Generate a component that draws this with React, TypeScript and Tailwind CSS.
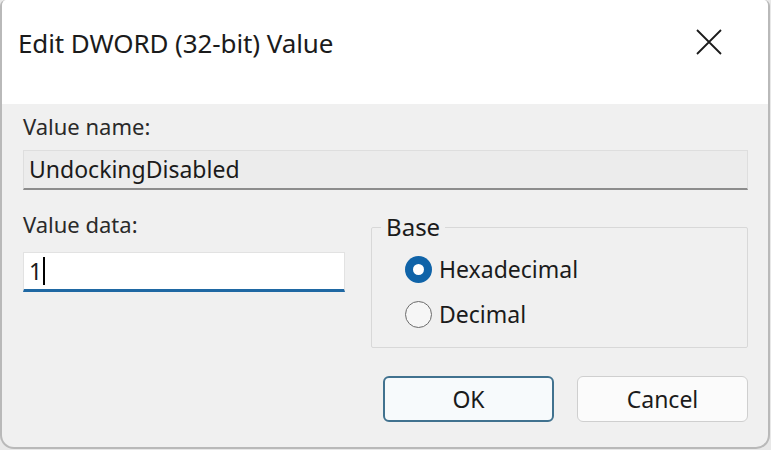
import React from "react";

const font = { fontFamily: '"Noto Sans", "Open Sans", sans-serif' };

function Radio({ checked, label }: { checked: boolean; label: string }) {
  return (
    <label className="flex h-[30px] items-center gap-[7px] text-[23px] text-[#1b1b1b]">
      {checked ? (
        <span className="flex h-[27px] w-[27px] items-center justify-center rounded-full bg-[#0f63a8]">
          <span className="h-[11px] w-[11px] rounded-full bg-white" />
        </span>
      ) : (
        <span className="h-[27px] w-[27px] rounded-full border-[1.5px] border-[#6b6b6b] bg-[#f6f6f6]" />
      )}
      <span className="leading-[30px]">{label}</span>
    </label>
  );
}

export default function App() {
  return (
    <div className="h-[450px] w-[771px] overflow-hidden bg-[#e8e8e8]" style={font}>
      <div className="flex h-[449px] w-[770px] flex-col overflow-hidden rounded-b-[14px] rounded-t-[6px] border-x-2 border-b-2 border-[#b9b9b9] bg-[#f0f0f0]">
        {/* title bar */}
        <div className="flex h-[104px] items-center justify-between bg-white pl-[16px] pr-[46px]">
          <h1 className="-mt-[18px] text-[26px] tracking-[-0.1px] text-[#1b1b1b]">
            Edit DWORD (32-bit) Value
          </h1>
          <svg width="26" height="26" viewBox="0 0 26 26" className="-mt-[20px]">
            <path d="M1 1 L25 25 M25 1 L1 25" stroke="#1b1b1b" strokeWidth="1.8" />
          </svg>
        </div>

        {/* body */}
        <div className="flex flex-1 flex-col pl-[21px] pr-[20px] text-[#1b1b1b]">
          <div className="mt-[10px] text-[22px] leading-[24px] text-[#2a2a2a]">Value name:</div>
          <div className="mt-[12px] flex h-[40px] items-center border border-[#dedede] border-b-[2px] border-b-[#8c8c8c] bg-[#ececec] px-[5px] text-[23px]">
            UndockingDisabled
          </div>

          <div className="mt-[22px] flex items-start gap-[26px]">
            <div className="flex w-[323px] flex-col">
              <div className="text-[22px] leading-[24px] text-[#2a2a2a]">Value data:</div>
              <div className="mt-[16px] flex h-[40px] items-center border border-[#e2e2e2] border-b-[3px] border-b-[#1f68a3] bg-white px-[5px] text-[23px]">
                1<span className="ml-[1px] h-[28px] w-[2px] bg-black" />
              </div>
            </div>

            <fieldset className="mt-[3px] h-[133px] w-[378px] rounded-[2px] border border-[#d8d8d8] pl-[9px]">
              <legend className="px-[5px] text-[24px] leading-[24px]">Base</legend>
              <div className="mt-[15px] flex flex-col gap-[15px] pl-[24px]">
                <Radio checked label="Hexadecimal" />
                <Radio checked={false} label="Decimal" />
              </div>
            </fieldset>
          </div>

          <div className="mt-[28px] flex justify-end gap-[23px]">
            <button className="h-[46px] w-[171px] rounded-[6px] border-2 border-[#41728f] bg-[#f7fafc] text-[23px] text-[#1b1b1b]">
              OK
            </button>
            <button className="h-[46px] w-[171px] rounded-[6px] border border-[#cfcfcf] bg-[#fbfbfb] text-[23px] text-[#1b1b1b]">
              Cancel
            </button>
          </div>
        </div>
      </div>
    </div>
  );
}
